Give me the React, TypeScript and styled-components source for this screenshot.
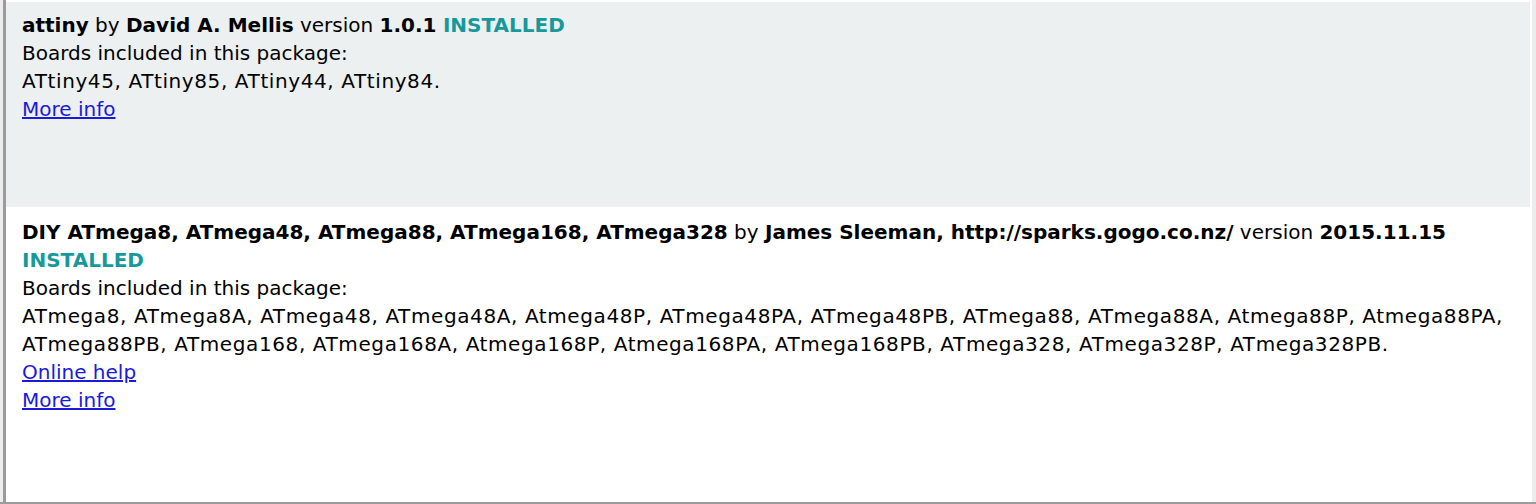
import styled, { createGlobalStyle } from 'styled-components';

const GlobalStyle = createGlobalStyle`
  html, body {
    margin: 0;
    padding: 0;
    background: #ffffff;
  }
  body {
    font-family: Verdana, 'DejaVu Sans', sans-serif;
  }
`;

type Platform = {
  name: string;
  author: string;
  version: string;
  boards: string;
  help?: boolean;
  selected?: boolean;
};

const platforms: Platform[] = [
  {
    name: 'attiny',
    author: 'David A. Mellis',
    version: '1.0.1',
    boards: 'ATtiny45, ATtiny85, ATtiny44, ATtiny84.',
    selected: true,
  },
  {
    name: 'DIY ATmega8, ATmega48, ATmega88, ATmega168, ATmega328',
    author: 'James Sleeman, http://sparks.gogo.co.nz/',
    version: '2015.11.15',
    boards:
      'ATmega8, ATmega8A, ATmega48, ATmega48A, Atmega48P, ATmega48PA, ATmega48PB, ATmega88, ATmega88A, Atmega88P, Atmega88PA, ATmega88PB, ATmega168, ATmega168A, Atmega168P, Atmega168PA, ATmega168PB, ATmega328, ATmega328P, ATmega328PB.',
    help: true,
  },
];

export default function App() {
  return (
    <>
      <GlobalStyle />
      <Page>
        <Main>
          <Gutter />
          <Panel>
            {platforms.map((p) => (
              <Row key={p.name} $selected={p.selected}>
                <div>
                  <b>{p.name}</b> by <b>{p.author}</b> version <b>{p.version}</b>{' '}
                  <Installed>INSTALLED</Installed>
                </div>
                <div>Boards included in this package:</div>
                <Boards>{p.boards}</Boards>
                {p.help && (
                  <div>
                    <Link href="#">Online help</Link>
                  </div>
                )}
                <div>
                  <Link href="#">More info</Link>
                </div>
              </Row>
            ))}
          </Panel>
          <ScrollEdge />
        </Main>
        <BottomLine />
      </Page>
    </>
  );
}

const Page = styled.div`
  width: 1536px;
  height: 504px;
  display: flex;
  flex-direction: column;
  overflow: hidden;
`;

const Main = styled.div`
  flex: 1;
  display: flex;
  min-height: 0;
`;

const Gutter = styled.div`
  width: 3px;
  background: #ececec;
`;

const Panel = styled.div`
  flex: 1;
  border-left: 3px solid #9b9b9b;
  padding-top: 2px;
  background: #ffffff;
  display: flex;
  flex-direction: column;
`;

const ScrollEdge = styled.div`
  width: 4px;
  border-left: 2px solid #ffffff;
  background: #ececec;
`;

const BottomLine = styled.div`
  height: 2px;
  background: #9b9b9b;
`;

const Row = styled.div<{ $selected?: boolean }>`
  background: ${(p) => (p.$selected ? '#edf0f1' : '#ffffff')};
  height: ${(p) => (p.$selected ? '205px' : 'auto')};
  box-sizing: border-box;
  padding: ${(p) => (p.$selected ? '9px' : '11px')} 16px 0 16px;
  font-size: 20px;
  line-height: 28px;
  color: #000000;

  b {
    font-weight: bold;
  }
`;

const Boards = styled.div`
  letter-spacing: 0.6px;
`;

const Installed = styled.b`
  color: #17999c;
`;

const Link = styled.a`
  color: #1a1adb;
  text-decoration: underline;
`;
